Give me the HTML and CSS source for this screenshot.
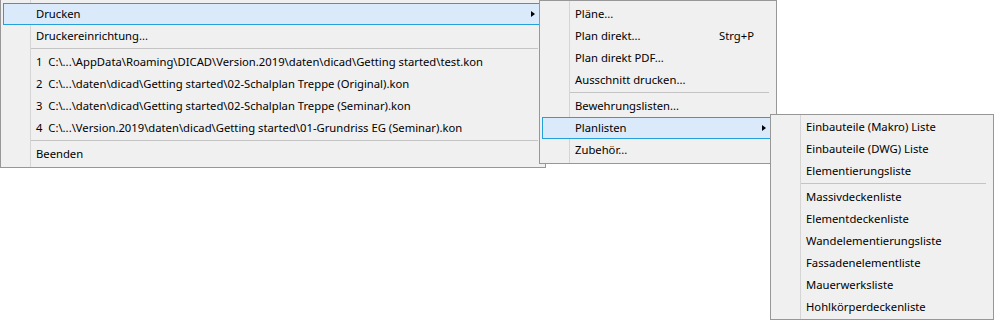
FILE: index.html
```html
<!DOCTYPE html>
<html lang="de">

<head>
    <meta charset="UTF-8">
    <title>Drucken</title>
    <link rel="stylesheet" href="styles.css">
</head>

<body>

    <!-- File menu, opened on "Drucken" > "Planlisten" -->
    <div class="menu main-menu">
        <div class="item has-sub active">
            <span class="label">Drucken</span>
            <span class="arrow"></span>

            <div class="menu sub print-menu">
                <div class="item"><span class="label">Pläne...</span></div>
                <div class="item"><span class="label">Plan direkt...</span><span class="shortcut">Strg+P</span></div>
                <div class="item"><span class="label">Plan direkt PDF...</span></div>
                <div class="item"><span class="label">Ausschnitt drucken...</span></div>
                <div class="sep"></div>
                <div class="item"><span class="label">Bewehrungslisten...</span></div>
                <div class="item has-sub active">
                    <span class="label">Planlisten</span>
                    <span class="arrow"></span>

                    <div class="menu sub lists-menu">
                        <div class="item"><span class="label">Einbauteile (Makro) Liste</span></div>
                        <div class="item"><span class="label">Einbauteile (DWG) Liste</span></div>
                        <div class="item"><span class="label">Elementierungsliste</span></div>
                        <div class="sep"></div>
                        <div class="item"><span class="label">Massivdeckenliste</span></div>
                        <div class="item"><span class="label">Elementdeckenliste</span></div>
                        <div class="item"><span class="label">Wandelementierungsliste</span></div>
                        <div class="item"><span class="label">Fassadenelementliste</span></div>
                        <div class="item"><span class="label">Mauerwerksliste</span></div>
                        <div class="item"><span class="label">Hohlkörperdeckenliste</span></div>
                    </div>
                </div>
                <div class="item"><span class="label">Zubehör...</span></div>
            </div>
        </div>
        <div class="item"><span class="label">Druckereinrichtung...</span></div>
        <div class="sep"></div>
        <!-- recently opened files -->
        <div class="item"><span class="label recent">1  C:\...\AppData\Roaming\DICAD\Version.2019\daten\dicad\Getting started\test.kon</span></div>
        <div class="item"><span class="label recent">2  C:\...\daten\dicad\Getting started\02-Schalplan Treppe (Original).kon</span></div>
        <div class="item"><span class="label recent">3  C:\...\daten\dicad\Getting started\02-Schalplan Treppe (Seminar).kon</span></div>
        <div class="item"><span class="label recent">4  C:\...\Version.2019\daten\dicad\Getting started\01-Grundriss EG (Seminar).kon</span></div>
        <div class="sep"></div>
        <div class="item"><span class="label">Beenden</span></div>
    </div>

</body>

</html>
```

FILE: styles.css
```css
html,
body {
    height: 100%;
}

body {
    margin: 0;
    padding: 0;
    min-height: 322px;
    background-color: #fff;
    font-family: "Noto Sans", "Open Sans", sans-serif;
    font-size: 11.25px;
    color: #000;
}

/* Menu box */
.menu {
    box-sizing: border-box;
    border: 1px solid #979797;
    padding: 2px 5px 2px 2px;
    background-color: #f0f0f0;
    /* icon column line */
    background-image: linear-gradient(to right, transparent 29px, #d5d5d5 29px, #d5d5d5 30px, transparent 30px);
}

.main-menu {
    width: 546px;
    border-top: none;
    padding-top: 3px;
}

.sub {
    position: absolute;
    top: -4px;
    left: 100%;
    z-index: 2;
}

.print-menu {
    width: 238px;
}

.lists-menu {
    width: 224px;
    padding-top: 1px;
    padding-bottom: 1px;
}

/* Menu entries */
.item {
    position: relative;
    box-sizing: border-box;
    height: 22px;
    display: flex;
    align-items: center;
    padding-left: 32px;
    padding-right: 16px;
    border: 1px solid transparent;
    white-space: nowrap;
}

.item.active {
    background-color: #dbeafb;
    border-color: #26a0da;
}

.label {
    flex: 1;
    line-height: 20px;
}

.recent {
    white-space: pre;
}

.shortcut {
    line-height: 20px;
}

.arrow {
    position: absolute;
    right: 4px;
    top: 7px;
    width: 0;
    height: 0;
    border-top: 3.5px solid transparent;
    border-bottom: 3.5px solid transparent;
    border-left: 4px solid #000;
}

.sep {
    height: 4px;
    margin-left: 28px;
    margin-right: 2px;
    background-image: linear-gradient(to bottom, transparent 1px, #c4c4c4 1px, #c4c4c4 2px, transparent 2px);
}
```
